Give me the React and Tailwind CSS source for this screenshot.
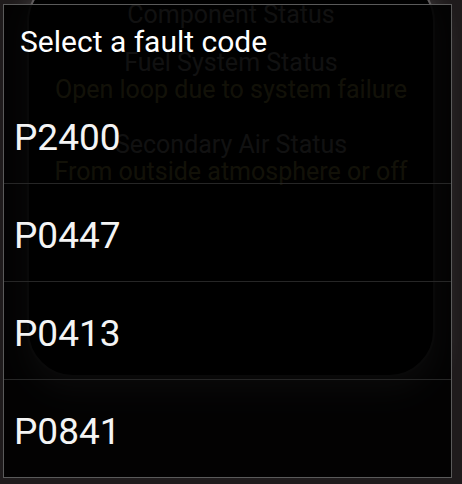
export default function App() {
  const codes = ["P2400", "P0447", "P0413", "P0841"];
  return (
    <div
      className="relative w-[462px] h-[484px] overflow-hidden bg-[#1f1b1c]"
      style={{ fontFamily: "Roboto, 'Liberation Sans', sans-serif" }}
    >
      {/* underlying screen */}
      <div className="flex flex-col">
        <div className="mx-[27px] mt-[-24px] h-[401px] rounded-[46px] border-2 border-[#5e5a5b] bg-black shadow-[0_14px_26px_rgba(255,255,255,0.3)] flex flex-col items-center pt-[23px] text-[25px] leading-[27px]">
          <div className="text-[#a8a8a8]">Component Status</div>
          <div className="mt-[21px] text-[#a8a8a8]">Fuel System Status</div>
          <div className="text-[#b8ae58]">Open loop due to system failure</div>
          <div className="mt-[28px] text-[#a8a8a8]">Secondary Air Status</div>
          <div className="text-[#b8ae58]">From outside atmosphere or off</div>
        </div>
      </div>

      {/* dialog overlay */}
      <div className="absolute left-[3px] top-[4px] w-[449px] h-[474px] border border-[#5a5a5a] bg-black/[0.9] flex flex-col">
        <div className="h-[80px] pl-[16px] pt-[19px] text-[30px] leading-[35px] text-white">
          Select a fault code
        </div>
        {codes.map((c, i) => (
          <div
            key={c}
            className={
              i === 0
                ? "h-[98px] flex items-center pt-[6px] pl-[10px] text-[37px] leading-[43px] text-[#f4f4f4]"
                : "h-[98px] border-t border-[#262626] flex items-center pt-[6px] pl-[10px] text-[37px] leading-[43px] text-[#f4f4f4]"
            }
          >
            {c}
          </div>
        ))}
      </div>
    </div>
  );
}
